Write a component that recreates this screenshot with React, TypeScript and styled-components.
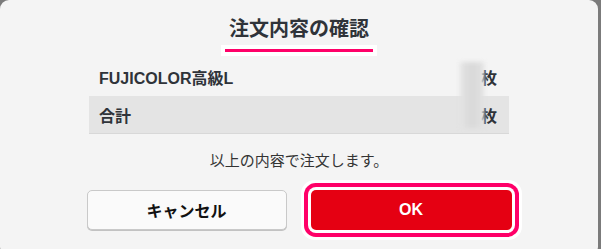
import React from "react";
import styled, { createGlobalStyle } from "styled-components";

const Global = createGlobalStyle`
  html, body { margin: 0; padding: 0; overflow: hidden; }
  body {
    background: #7b7b7b;
    font-family: "Liberation Sans", "Noto Sans CJK JP", sans-serif;
    color: #333;
  }
`;

const Modal = styled.div`
  width: 598px;
  height: 256px;
  box-sizing: border-box;
  background: #f4f4f4;
  border-radius: 9px;
  padding-top: 14px;
  display: flex;
  flex-direction: column;
  align-items: center;
`;

const Title = styled.h2`
  margin: 0;
  font-size: 20px;
  line-height: 30px;
  font-weight: 700;
  color: #2f3339;
`;

const Underline = styled.div`
  margin-top: 1px;
  width: 156px;
  height: 11px;
  box-sizing: border-box;
  border: 4px solid #ffffff;
  background: #ff0068;
`;

const Table = styled.div`
  position: relative;
  margin-top: 2px;
  width: 420px;
  display: flex;
  flex-direction: column;
`;

const Row = styled.div<{ $shade?: boolean }>`
  height: 38px;
  box-sizing: border-box;
  display: flex;
  align-items: center;
  justify-content: space-between;
  padding: 0 12px 0 10px;
  font-size: 16px;
  font-weight: 700;
  color: #2f3339;
  background: ${(p) => (p.$shade ? "#e4e4e4" : "transparent")};
  border-bottom: ${(p) => (p.$shade ? "1px solid #d8d8d8" : "none")};
`;

const Hidden = styled.div`
  position: absolute;
  left: 371px;
  top: 4px;
  width: 24px;
  height: 66px;
  background: linear-gradient(90deg, #e4e4e4 0%, #d8d8d8 50%, #e2e2e2 100%);
  filter: blur(2px);
`;

const Message = styled.p`
  margin: 16px 0 0;
  font-size: 15px;
  line-height: 22px;
  color: #333;
`;

const Buttons = styled.div`
  margin-top: 18px;
  display: flex;
  gap: 24px;
  justify-content: center;
`;

const Button = styled.button<{ $primary?: boolean }>`
  height: 40px;
  width: ${(p) => (p.$primary ? "201px" : "200px")};
  box-sizing: border-box;
  border-radius: 5px;
  font-family: inherit;
  font-size: 16px;
  font-weight: 700;
  cursor: pointer;
  border: ${(p) => (p.$primary ? "none" : "1px solid #c9c9c9")};
  background: ${(p) => (p.$primary ? "#e50012" : "#fafafa")};
  color: ${(p) => (p.$primary ? "#ffffff" : "#111")};
  box-shadow: ${(p) =>
    p.$primary
      ? "0 0 0 3px #ffffff, 0 0 0 7px #ff0068, 0 0 0 10px #ffffff"
      : "0 1px 0 #c2c2c2"};
`;

export default function App() {
  return (
    <>
      <Global />
      <Modal>
        <Title>注文内容の確認</Title>
        <Underline />
        <Table>
          <Row>
            <span>FUJICOLOR高級L</span>
            <span>枚</span>
          </Row>
          <Row $shade>
            <span>合計</span>
            <span>枚</span>
          </Row>
          <Hidden />
        </Table>
        <Message>以上の内容で注文します。</Message>
        <Buttons>
          <Button>キャンセル</Button>
          <Button $primary>OK</Button>
        </Buttons>
      </Modal>
    </>
  );
}
